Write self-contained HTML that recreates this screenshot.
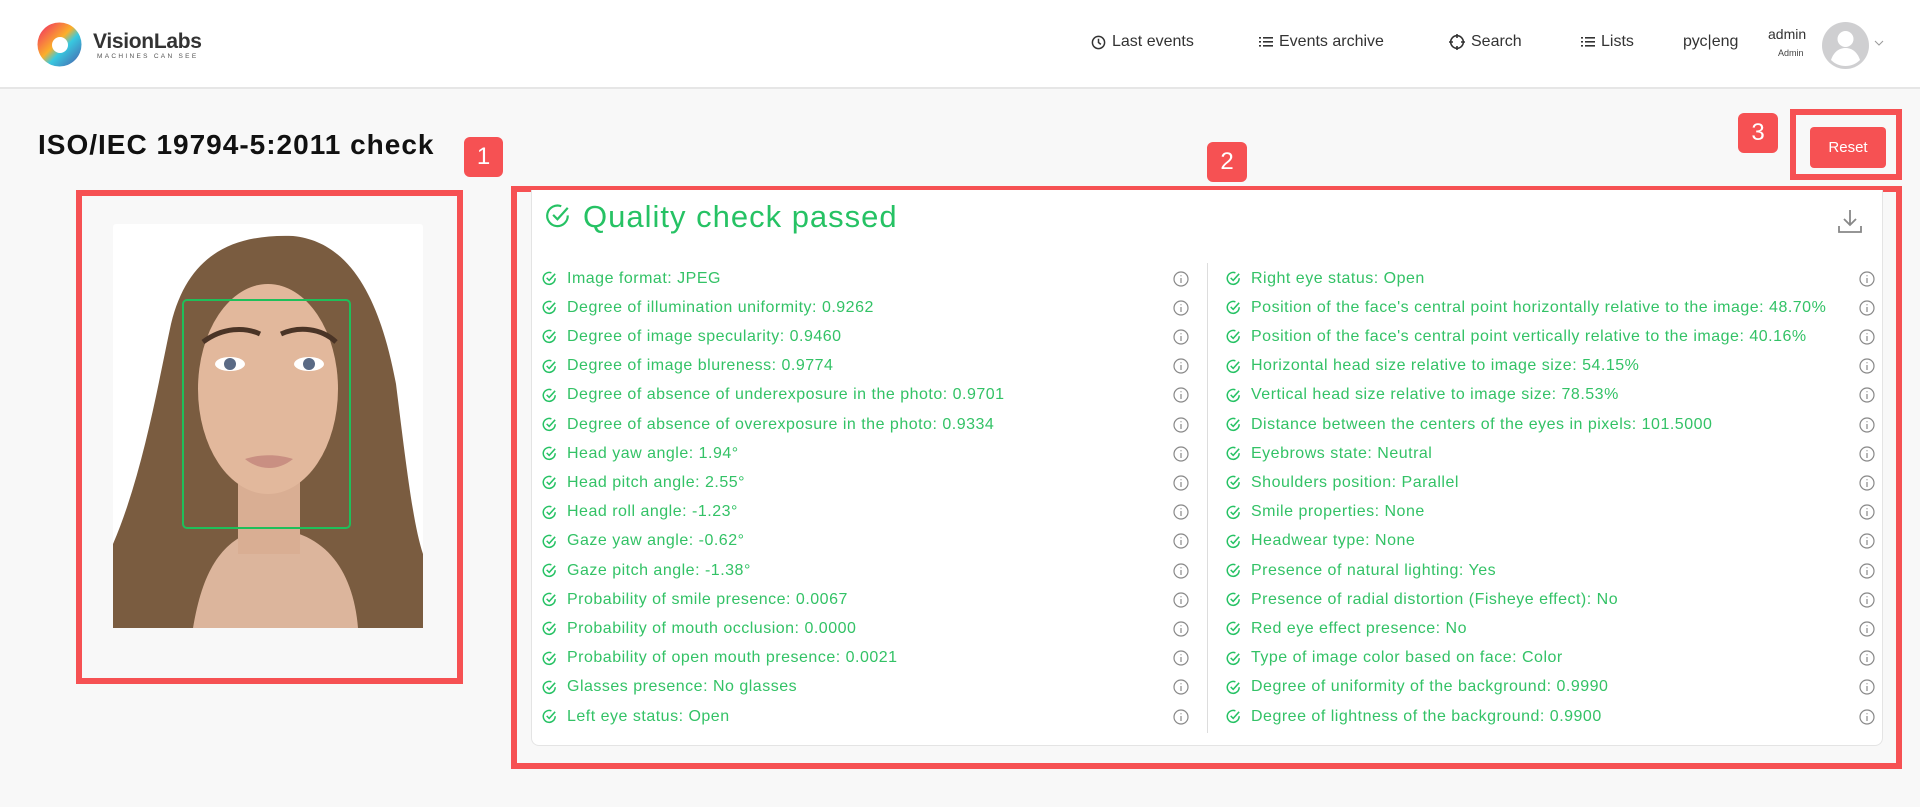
<!DOCTYPE html>
<html><head><meta charset="utf-8"><style>
*{box-sizing:border-box;margin:0;padding:0}
body{width:1920px;height:807px;background:#f8f8f8;font-family:"Liberation Sans",sans-serif;position:relative;overflow:hidden;color:#222}
.hdr{position:absolute;left:0;top:0;width:1920px;height:89px;background:#fff;border-bottom:2px solid #e6e6e6}
.abs{position:absolute}
.nav{position:absolute;top:33px;font-size:16px;color:#333;display:flex;align-items:center;gap:6px;white-space:nowrap}
.red{border:6px solid #f65153}
.badge{position:absolute;background:#f65153;color:#fff;font-size:24px;text-align:center;border-radius:6px;line-height:39px}
.row{position:absolute;height:29px;display:flex;align-items:center;font-size:16px;letter-spacing:0.5px;color:#33c266;white-space:nowrap}
.row svg{margin-right:10px}
.info{position:absolute;width:16px;height:16px}
</style></head><body>
<div class="hdr">
 <svg class="abs" style="left:37px;top:22px" width="45" height="45" viewBox="0 0 45 45">
  <defs><linearGradient id="g1" x1="0" y1="0" x2="1" y2="1"><stop offset="0" stop-color="#f0206a"/><stop offset=".45" stop-color="#fbb02a"/><stop offset=".6" stop-color="#38c9e0"/><stop offset="1" stop-color="#4a58a8"/></linearGradient></defs>
  <circle cx="22.5" cy="22.5" r="22" fill="url(#g1)"/><circle cx="23" cy="23" r="8" fill="#fff"/>
 </svg>
 <div class="abs" style="left:93px;top:30px;font-size:21px;font-weight:bold;color:#333;letter-spacing:-.3px">VisionLabs</div>
 <div class="abs" style="left:97px;top:53px;font-size:6.5px;color:#555;letter-spacing:2.3px">MACHINES CAN SEE</div>
 <div class="nav" style="left:1091px"><svg width="15" height="15" viewBox="0 0 16 16" fill="none" stroke="#333" stroke-width="1.6"><circle cx="8" cy="8" r="6.5"/><path d="M8 4v4l2.5 2"/></svg>Last events</div>
 <div class="nav" style="left:1259px"><svg width="14" height="12" viewBox="0 0 14 12" fill="#333"><rect x="0" y="1" width="2" height="1.6"/><rect x="4" y="1" width="10" height="1.6"/><rect x="0" y="5" width="2" height="1.6"/><rect x="4" y="5" width="10" height="1.6"/><rect x="0" y="9" width="2" height="1.6"/><rect x="4" y="9" width="10" height="1.6"/></svg>Events archive</div>
 <div class="nav" style="left:1449px"><svg width="16" height="16" viewBox="0 0 16 16" fill="none" stroke="#333" stroke-width="1.6"><circle cx="8" cy="8" r="6.3"/><path d="M8 0v4M8 12v4M0 8h4M12 8h4"/></svg>Search</div>
 <div class="nav" style="left:1581px"><svg width="14" height="12" viewBox="0 0 14 12" fill="#333"><rect x="0" y="1" width="2" height="1.6"/><rect x="4" y="1" width="10" height="1.6"/><rect x="0" y="5" width="2" height="1.6"/><rect x="4" y="5" width="10" height="1.6"/><rect x="0" y="9" width="2" height="1.6"/><rect x="4" y="9" width="10" height="1.6"/></svg>Lists</div>
 <div class="nav" style="left:1683px">рус|eng</div>
 <div class="abs" style="left:1768px;top:26px;font-size:14px;color:#333">admin</div>
 <div class="abs" style="left:1778px;top:48px;font-size:9px;color:#444">Admin</div>
 <svg class="abs" style="left:1822px;top:22px" width="47" height="47" viewBox="0 0 47 47"><circle cx="23.5" cy="23.5" r="23.5" fill="#cfcfd1"/><circle cx="23.5" cy="17" r="8" fill="#fff"/><path d="M9 38c3-9 9-12 14.5-12S35 29 38 38c-4 4-9 6-14.5 6S13 42 9 38z" fill="#fff"/></svg>
 <svg class="abs" style="left:1874px;top:40px" width="10" height="6" viewBox="0 0 10 6" fill="none" stroke="#999" stroke-width="1"><path d="M1 1l4 4 4-4"/></svg>
</div>

<div class="abs" style="left:38px;top:129px;font-size:28px;font-weight:bold;color:#111;letter-spacing:1px">ISO/IEC 19794-5:2011 check</div>
<div class="badge" style="left:464px;top:137px;width:39px;height:40px">1</div>
<div class="badge" style="left:1207px;top:142px;width:40px;height:40px">2</div>
<div class="badge" style="left:1738px;top:113px;width:40px;height:40px">3</div>

<div class="abs red" style="left:76px;top:190px;width:387px;height:494px"></div>
<svg class="abs" style="left:113px;top:224px" width="310" height="404" viewBox="0 0 310 404">
 <rect width="310" height="404" rx="3" fill="#fff"/>
 <path d="M0 320C30 250 45 160 58 100 75 30 120 10 180 12 240 18 268 80 283 160 293 240 300 300 310 330V404H0z" fill="#7a5c40"/>
 <path d="M80 404c10-60 30-90 70-100 60 0 90 40 95 100z" fill="#dcb59c"/>
 <rect x="125" y="220" width="62" height="110" fill="#d9ae93"/>
 <ellipse cx="155" cy="165" rx="70" ry="105" fill="#e2b89c"/>
 <path d="M90 118c20-15 42-15 57-8M168 110c18-8 40-6 55 8" stroke="#4a3426" stroke-width="5" fill="none"/>
 <ellipse cx="117" cy="140" rx="15" ry="7" fill="#fff"/><circle cx="117" cy="140" r="6" fill="#5a6a85"/>
 <ellipse cx="196" cy="140" rx="15" ry="7" fill="#fff"/><circle cx="196" cy="140" r="6" fill="#5a6a85"/>
 <path d="M132 235c15-5 33-5 48 0c-15 12-33 12-48 0z" fill="#c98f82"/>
 <rect x="70" y="76" width="167" height="228" rx="4" fill="none" stroke="#1fbf5a" stroke-width="2"/>
</svg>

<div class="abs red" style="left:511px;top:186px;width:1391px;height:583px"></div>
<div class="abs" style="left:531px;top:190px;width:1352px;height:556px;background:#fff;border:1px solid #e4e4e4;border-top:none;border-radius:0 0 8px 8px"></div>
<svg class="abs" style="left:545px;top:203px" width="26" height="26" viewBox="0 0 24 24" fill="none" stroke="#26c264" stroke-width="2"><path d="M21 11.5A9.5 9.5 0 1 1 15 3"/><path d="M7.5 11l4 4L21 4.5"/></svg>
<div class="abs" style="left:583px;top:199px;font-size:31px;color:#26c264;letter-spacing:1px">Quality check passed</div>
<svg class="abs" style="left:1837px;top:208px" width="26" height="26" viewBox="0 0 26 26" fill="none" stroke="#888" stroke-width="1.8"><path d="M13 2v15M7 11l6 6 6-6M2 18v6h22v-6"/></svg>
<div class="abs" style="left:1207px;top:263px;width:1px;height:470px;background:#ddd"></div>

<div class="abs" style="left:1790px;top:109px;width:112px;height:71px;border:6px solid #f65153"></div>
<div class="abs" style="left:1810px;top:127px;width:76px;height:41px;background:#f65153;border-radius:4px;color:#fff;font-size:15px;text-align:center;line-height:41px">Reset</div>

<div id="rows"></div>
<script>
var L=["Image format: JPEG","Degree of illumination uniformity: 0.9262","Degree of image specularity: 0.9460","Degree of image blureness: 0.9774","Degree of absence of underexposure in the photo: 0.9701","Degree of absence of overexposure in the photo: 0.9334","Head yaw angle: 1.94°","Head pitch angle: 2.55°","Head roll angle: -1.23°","Gaze yaw angle: -0.62°","Gaze pitch angle: -1.38°","Probability of smile presence: 0.0067","Probability of mouth occlusion: 0.0000","Probability of open mouth presence: 0.0021","Glasses presence: No glasses","Left eye status: Open"];
var R=["Right eye status: Open","Position of the face's central point horizontally relative to the image: 48.70%","Position of the face's central point vertically relative to the image: 40.16%","Horizontal head size relative to image size: 54.15%","Vertical head size relative to image size: 78.53%","Distance between the centers of the eyes in pixels: 101.5000","Eyebrows state: Neutral","Shoulders position: Parallel","Smile properties: None","Headwear type: None","Presence of natural lighting: Yes","Presence of radial distortion (Fisheye effect): No","Red eye effect presence: No","Type of image color based on face: Color","Degree of uniformity of the background: 0.9990","Degree of lightness of the background: 0.9900"];
var chk='<svg width="15" height="15" viewBox="0 0 24 24" fill="none" stroke="#26c264" stroke-width="2.4"><path d="M21 11.5A9.5 9.5 0 1 1 15 3"/><path d="M7.5 11l4 4L21 4.5"/></svg>';
var inf='<svg width="16" height="16" viewBox="0 0 16 16" fill="none" stroke="#888" stroke-width="1.2"><circle cx="8" cy="8" r="7"/><path d="M8 7v5M8 4.2v1"/></svg>';
var h="";
for(var i=0;i<16;i++){var y=264+i*29.2;
h+='<div class="row" style="left:542px;top:'+y+'px">'+chk+L[i]+'</div><div class="info" style="left:1173px;top:'+(y+6.5)+'px">'+inf+'</div>';
h+='<div class="row" style="left:1226px;top:'+y+'px">'+chk+R[i]+'</div><div class="info" style="left:1859px;top:'+(y+6.5)+'px">'+inf+'</div>';}
document.getElementById("rows").innerHTML=h;
</script>
</body></html>
